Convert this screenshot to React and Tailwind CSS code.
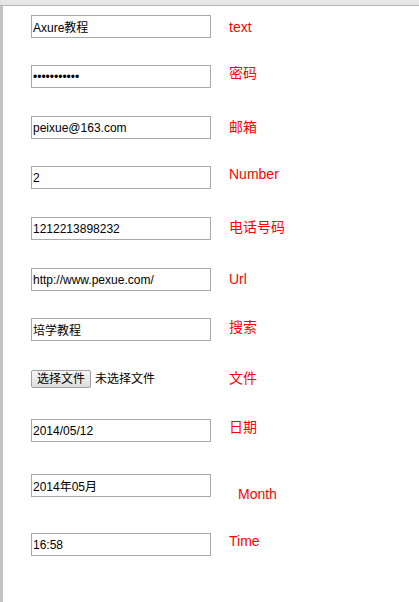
import React from 'react';

const rows = [
  { value: 'Axure教程', label: 'text', h: 50, mt: 4 },
  { value: '•••••••••••', label: '密码', h: 51, mt: 0, type: 'password' },
  { value: 'peixue@163.com', label: '邮箱', h: 50, mt: 3 },
  { value: '2', label: 'Number', h: 51, mt: 0 },
  { value: '1212213898232', label: '电话号码', h: 51, mt: 2 },
  { value: 'http://www.pexue.com/', label: 'Url', h: 50, mt: 3 },
  { value: '培学教程', label: '搜索', h: 52, mt: 1 },
  { file: true, label: '文件', h: 49, mt: 0 },
  { value: '2014/05/12', label: '日期', h: 55, mt: 0 },
  { value: '2014年05月', label: 'Month', h: 59, mt: 12, ml: 27 },
  { value: '16:58', label: 'Time', h: 50, mt: 0 },
];

const font = { fontFamily: '"Liberation Sans", Arial, "Noto Sans CJK SC", sans-serif' };

export default function App() {
  return (
    <div className="w-[419px] h-[602px] bg-white overflow-hidden flex flex-col" style={font}>
      {/* browser chrome strip */}
      <div className="h-[6px] shrink-0 bg-[#e6e6e6] border-b border-[#b4b4b4]" />
      <div className="flex flex-1">
        <div className="w-[3px] bg-[#c3c3c3]" />
        <div className="flex flex-col pl-[28px] pt-[9px]">
          {rows.map((r) => (
            <div key={r.label} className="flex items-start" style={{ height: r.h }}>
              {r.file ? (
                <div className="w-[180px] flex items-center text-[12px] text-black">
                  <button className="h-[18px] px-[5px] border border-[#a0a0a0] rounded-[2px] bg-gradient-to-b from-[#f6f6f6] to-[#dddddd] leading-[16px] text-[12px]">
                    选择文件
                  </button>
                  <span className="ml-[4px]">未选择文件</span>
                </div>
              ) : (
                <input
                  readOnly
                  type={r.type === 'password' ? 'password' : 'text'}
                  defaultValue={r.type === 'password' ? 'aaaaaaaaaaa' : r.value}
                  className="w-[180px] h-[23px] border border-[#a9a9a9] px-[1px] text-[12px] text-black outline-none bg-white"
                  style={font}
                />
              )}
              <span
                className="text-[14px] leading-[16px] text-[#ff0000] whitespace-nowrap"
                style={{ marginTop: r.mt, marginLeft: r.ml || 18 }}
              >
                {r.label}
              </span>
            </div>
          ))}
        </div>
      </div>
    </div>
  );
}
